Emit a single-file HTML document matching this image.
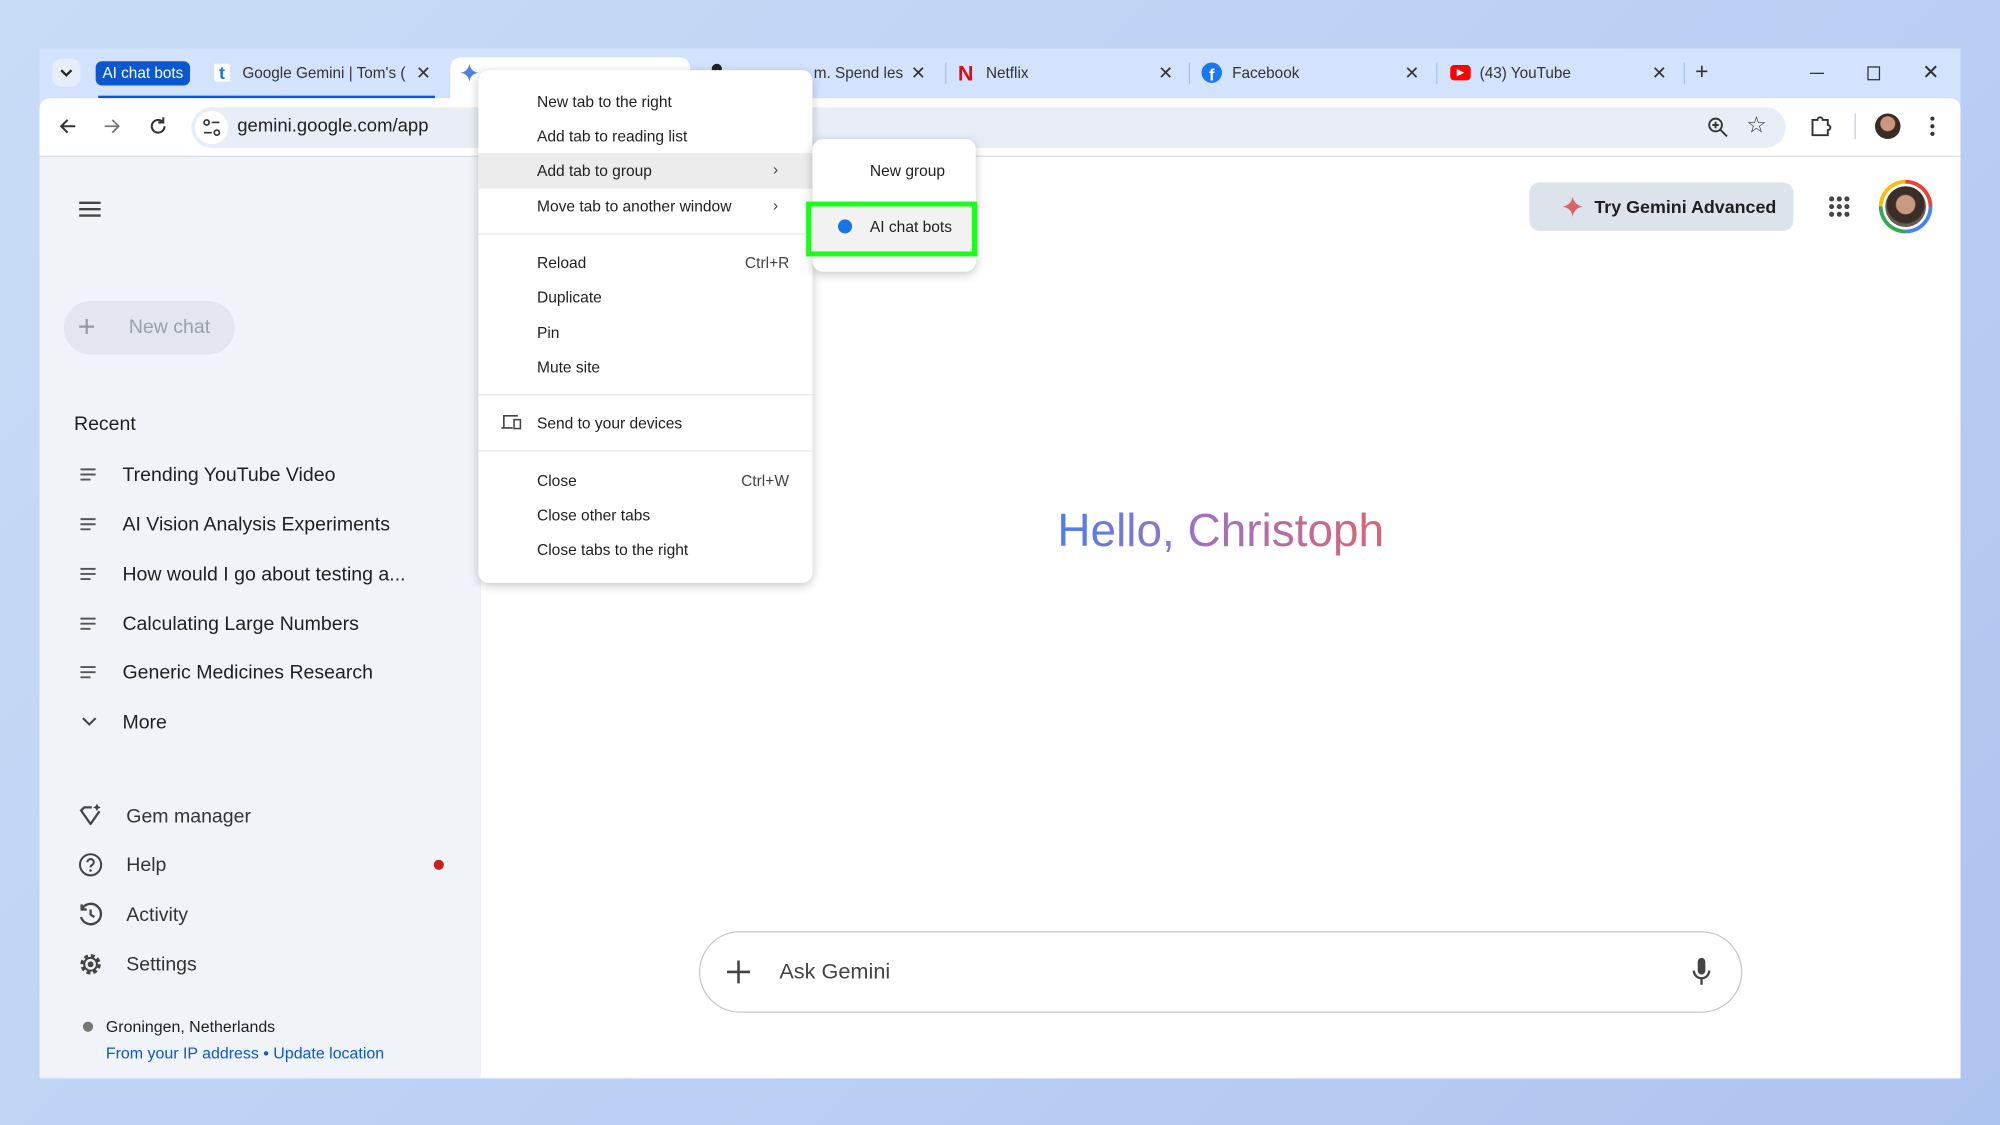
<!DOCTYPE html>
<html><head><meta charset="utf-8"><style>
html,body{margin:0;padding:0;width:2000px;height:1125px;overflow:hidden;}
body{background:linear-gradient(135deg,#c9dcf6 0%,#bcd2f4 50%,#aec4f0 100%);font-family:"Liberation Sans",sans-serif;}
#s{position:absolute;left:0;top:0;width:1568px;height:882px;transform:scale(1.27551);transform-origin:0 0;}
.a{position:absolute;}
.t{position:absolute;white-space:nowrap;}
.mi{position:absolute;left:421px;font-size:12.2px;color:#1f1f1f;white-space:nowrap;}
.side{position:absolute;font-size:15.3px;color:#1f1f1f;white-space:nowrap;}
.x{position:absolute;font-size:14px;color:#333;}
</style></head><body><div id="s">
<div class="a" style="left:31px;top:38px;width:1506px;height:808px;background:#d3e3fd;"></div>
<div class="a" style="left:41px;top:46px;width:22px;height:22px;border-radius:7px;background:#e6eefc;"></div>
<svg class="a" style="left:46px;top:51px" width="12" height="12"><path d="M2 4l4 4 4-4" stroke="#222" stroke-width="1.8" fill="none"/></svg>
<div class="a" style="left:75px;top:48px;width:74px;height:19px;border-radius:5px;background:#0b57d0;color:#fff;font-size:12px;line-height:19px;text-align:center;">AI chat bots</div>
<div class="a" style="left:77px;top:75px;width:264px;height:2px;background:#0b57d0;"></div>
<div class="a" style="left:168px;top:50px;width:12px;height:14px;background:#fff;color:#1a73e8;font-weight:bold;font-size:14px;line-height:14px;text-align:center;">t</div>
<div class="t" style="left:190px;top:50px;font-size:12px;color:#333;">Google Gemini | Tom's (</div>
<div class="x" style="left:326px;top:49px;">✕</div>
<div class="a" style="left:353px;top:45px;width:188px;height:35px;background:#fff;border-radius:8px 8px 0 0;"></div>
<svg class="a" style="left:361px;top:50px" width="14" height="14"><path d="M7 0C7.5 4 10 6.5 14 7C10 7.5 7.5 10 7 14C6.5 10 4 7.5 0 7C4 6.5 6.5 4 7 0Z" fill="#4c7fe8"/></svg>
<div class="a" style="left:558px;top:50px;width:8px;height:8px;border-radius:4px;background:#222;"></div>
<div class="t" style="left:638px;top:50px;font-size:12px;color:#333;">m. Spend les</div>
<div class="x" style="left:714px;top:49px;">✕</div>
<div class="a" style="left:741px;top:49px;width:1px;height:17px;background:#a8c0ec;"></div>
<div class="t" style="left:751px;top:48px;font-size:17px;font-weight:bold;color:#e50914;">N</div>
<div class="t" style="left:773px;top:50px;font-size:12px;color:#333;">Netflix</div>
<div class="x" style="left:908px;top:49px;">✕</div>
<div class="a" style="left:932px;top:49px;width:1px;height:17px;background:#a8c0ec;"></div>
<div class="a" style="left:942px;top:49px;width:16px;height:16px;border-radius:8px;background:#1877f2;color:#fff;font-weight:bold;font-size:13px;line-height:19px;text-align:center;">f</div>
<div class="t" style="left:966px;top:50px;font-size:12px;color:#333;">Facebook</div>
<div class="x" style="left:1101px;top:49px;">✕</div>
<div class="a" style="left:1126px;top:49px;width:1px;height:17px;background:#a8c0ec;"></div>
<div class="a" style="left:1137px;top:51px;width:16px;height:12px;border-radius:3px;background:#ff0000;"></div>
<svg class="a" style="left:1142px;top:54px" width="6" height="6"><path d="M0 0L6 3L0 6Z" fill="#fff"/></svg>
<div class="t" style="left:1160px;top:50px;font-size:12px;color:#333;">(43) YouTube</div>
<div class="x" style="left:1295px;top:49px;">✕</div>
<div class="a" style="left:1320px;top:49px;width:1px;height:17px;background:#a8c0ec;"></div>
<div class="t" style="left:1329px;top:46px;font-size:18px;color:#333;">+</div>
<div class="a" style="left:1419px;top:57px;width:11px;height:1px;background:#333;"></div>
<div class="a" style="left:1464px;top:52px;width:8px;height:9px;border:1.3px solid #333;"></div>
<div class="t" style="left:1507px;top:47px;font-size:16px;color:#333;">✕</div>
<div class="a" style="left:31px;top:77px;width:1506px;height:45px;background:#fff;border-radius:8px 8px 0 0;border-bottom:1px solid #dadce0;"></div>
<svg class="a" style="left:45px;top:91px" width="16" height="16"><path d="M14 8H3M8 3L3 8l5 5" stroke="#333" stroke-width="1.6" fill="none"/></svg>
<svg class="a" style="left:80px;top:91px" width="16" height="16"><path d="M2 8h11M8 3l5 5-5 5" stroke="#777" stroke-width="1.4" fill="none"/></svg>
<svg class="a" style="left:116px;top:91px" width="16" height="16"><path d="M13 8A5 5 0 1 1 11 4M12 1v4H8" stroke="#333" stroke-width="1.6" fill="none"/></svg>
<div class="a" style="left:150px;top:84px;width:1250px;height:32px;border-radius:16px;background:#e9eef6;"></div>
<div class="a" style="left:153px;top:87px;width:26px;height:26px;border-radius:13px;background:#fff;"></div>
<svg class="a" style="left:158px;top:92px" width="16" height="16"><circle cx="4" cy="4" r="2" stroke="#333" fill="none" stroke-width="1.3"/><path d="M8 4h6M2 12h6" stroke="#333" stroke-width="1.3"/><circle cx="12" cy="12" r="2" stroke="#333" fill="none" stroke-width="1.3"/></svg>
<div class="t" style="left:186px;top:91px;font-size:14.5px;color:#1f1f1f;">gemini.google.com/app</div>
<svg class="a" style="left:1338px;top:91px" width="17" height="17"><circle cx="7" cy="7" r="5" stroke="#333" stroke-width="1.5" fill="none"/><path d="M11 11l5 5M7 4.5v5M4.5 7h5" stroke="#333" stroke-width="1.5"/></svg>
<div class="t" style="left:1369px;top:88px;font-size:18px;color:#333;">☆</div>
<svg class="a" style="left:1419px;top:90px" width="17" height="18"><path d="M2 4h4a2 2 0 0 1 4 0h4v4a2 2 0 0 1 0 4v4H2z" stroke="#333" stroke-width="1.5" fill="none"/></svg>
<div class="a" style="left:1454px;top:89px;width:1px;height:20px;background:#c8d3e6;"></div>
<div class="a" style="left:1470px;top:89px;width:20px;height:20px;border-radius:10px;background:radial-gradient(circle at 50% 40%,#c9987e 0 35%,#3a2b25 40%);"></div>
<svg class="a" style="left:1511px;top:90px" width="8" height="18"><circle cx="4" cy="3" r="1.6" fill="#333"/><circle cx="4" cy="9" r="1.6" fill="#333"/><circle cx="4" cy="15" r="1.6" fill="#333"/></svg>
<div class="a" style="left:31px;top:123px;width:346px;height:722px;background:#f0f4f9;"></div>
<div class="a" style="left:377px;top:123px;width:1160px;height:722px;background:#fff;"></div>
<svg class="a" style="left:62px;top:157px" width="17" height="14"><path d="M0 2h17M0 7h17M0 12h17" stroke="#444" stroke-width="1.8"/></svg>
<div class="a" style="left:50px;top:236px;width:134px;height:42px;border-radius:21px;background:#e3e7ed;"></div>
<div class="t" style="left:61px;top:243px;font-size:24px;color:#999;font-weight:300;">+</div>
<div class="t" style="left:101px;top:248px;font-size:15.3px;color:#9aa0a6;">New chat</div>
<div class="t" style="left:58px;top:324px;font-size:15.3px;color:#1f1f1f;">Recent</div>
<svg width="0" height="0" style="position:absolute"><defs><symbol id="ln" viewBox="0 0 12 10"><path d="M0 1h12M0 5h12M0 9h8" stroke="#555" stroke-width="1.5"/></symbol></defs></svg>
<svg class="a" style="left:63px;top:367px" width="12" height="10"><use href="#ln"/></svg>
<div class="side" style="left:96px;top:364px;">Trending YouTube Video</div>
<svg class="a" style="left:63px;top:406px" width="12" height="10"><use href="#ln"/></svg>
<div class="side" style="left:96px;top:403px;">AI Vision Analysis Experiments</div>
<svg class="a" style="left:63px;top:445px" width="12" height="10"><use href="#ln"/></svg>
<div class="side" style="left:96px;top:442px;">How would I go about testing a...</div>
<svg class="a" style="left:63px;top:484px" width="12" height="10"><use href="#ln"/></svg>
<div class="side" style="left:96px;top:481px;">Calculating Large Numbers</div>
<svg class="a" style="left:63px;top:522px" width="12" height="10"><use href="#ln"/></svg>
<div class="side" style="left:96px;top:519px;">Generic Medicines Research</div>
<svg class="a" style="left:64px;top:562px" width="12" height="8"><path d="M1 1l5 5 5-5" stroke="#444" stroke-width="1.6" fill="none"/></svg>
<div class="side" style="left:96px;top:558px;">More</div>
<svg class="a" style="left:61px;top:630px" width="20" height="20"><path d="M2 6l3-3h6M3 6l7 10 7-10" stroke="#444" stroke-width="1.8" fill="none" stroke-linejoin="round"/><path d="M15 0l1 2 2 1-2 1-1 2-1-2-2-1 2-1z" fill="#444"/></svg>
<div class="side" style="left:99px;top:632px;color:#333;">Gem manager</div>
<svg class="a" style="left:61px;top:668px" width="20" height="20"><circle cx="10" cy="10" r="8.3" stroke="#444" stroke-width="1.6" fill="none"/><path d="M7.5 8a2.5 2.5 0 1 1 3.5 2.3c-.8.4-1 .9-1 1.7" stroke="#444" stroke-width="1.6" fill="none"/><circle cx="10" cy="14.5" r="1" fill="#444"/></svg>
<div class="side" style="left:99px;top:670px;color:#333;">Help</div>
<div class="a" style="left:340px;top:674px;width:8px;height:8px;border-radius:4px;background:#c5221f;"></div>
<svg class="a" style="left:61px;top:707px" width="20" height="20"><path d="M3 6A8 8 0 1 1 2.5 12M3 2v4h4M10 6v4l3 2" stroke="#444" stroke-width="1.8" fill="none"/></svg>
<div class="side" style="left:99px;top:709px;color:#333;">Activity</div>
<svg class="a" style="left:61px;top:746px" width="20" height="20"><circle cx="10" cy="10" r="6.5" stroke="#444" stroke-width="3" fill="none" stroke-dasharray="3 2.1"/><circle cx="10" cy="10" r="5" stroke="#444" stroke-width="1.6" fill="none"/><circle cx="10" cy="10" r="2.3" fill="#444"/></svg>
<div class="side" style="left:99px;top:748px;color:#333;">Settings</div>
<div class="a" style="left:65px;top:801px;width:8px;height:8px;border-radius:4px;background:#777;"></div>
<div class="t" style="left:83px;top:798px;font-size:12.5px;color:#1f1f1f;">Groningen, Netherlands</div>
<div class="t" style="left:83px;top:819px;font-size:12.5px;color:#0b57d0;">From your IP address • Update location</div>
<div class="a" style="left:1199px;top:143px;width:207px;height:38px;border-radius:8px;background:#dde3ea;"></div>
<svg class="a" style="left:1225px;top:154px" width="16" height="16"><path d="M8 0C8.6 4.5 11.5 7.4 16 8C11.5 8.6 8.6 11.5 8 16C7.4 11.5 4.5 8.6 0 8C4.5 7.4 7.4 4.5 8 0Z" fill="#d9636b"/></svg>
<div class="t" style="left:1250px;top:154px;font-size:14px;color:#1f1f1f;font-weight:bold;">Try Gemini Advanced</div>
<svg class="a" style="left:1433px;top:153px" width="18" height="18"><g fill="#444"><circle cx="3" cy="3" r="2"/><circle cx="9" cy="3" r="2"/><circle cx="15" cy="3" r="2"/><circle cx="3" cy="9" r="2"/><circle cx="9" cy="9" r="2"/><circle cx="15" cy="9" r="2"/><circle cx="3" cy="15" r="2"/><circle cx="9" cy="15" r="2"/><circle cx="15" cy="15" r="2"/></g></svg>
<div class="a" style="left:1473px;top:141px;width:42px;height:42px;border-radius:21px;background:conic-gradient(#ea4335 0 25%,#4285f4 25% 50%,#34a853 50% 75%,#fbbc05 75% 100%);"></div>
<div class="a" style="left:1476px;top:144px;width:36px;height:36px;border-radius:18px;background:#fff;"></div>
<div class="a" style="left:1478px;top:146px;width:32px;height:32px;border-radius:16px;background:radial-gradient(circle at 50% 45%,#c99a82 0 30%,#3b2e28 34% 60%,#6b5a50 64%);"></div>
<div class="t" style="left:829px;top:395px;font-size:36px;background:linear-gradient(90deg,#4a80ea 0%,#9b72cb 40%,#d96570 100%);-webkit-background-clip:text;background-clip:text;color:transparent;">Hello, Christoph</div>
<div class="a" style="left:548px;top:730px;width:816px;height:62px;border:1px solid #c8c8c8;border-radius:32px;background:#fff;"></div>
<svg class="a" style="left:569px;top:752px" width="20" height="20"><path d="M10 1v18M1 10h18" stroke="#444" stroke-width="2"/></svg>
<div class="t" style="left:611px;top:752px;font-size:17px;color:#444;">Ask Gemini</div>
<svg class="a" style="left:1326px;top:751px" width="16" height="22"><rect x="5" y="0" width="6" height="13" rx="3" fill="#444"/><path d="M2 10a6 6 0 0 0 12 0M8 16v5" stroke="#444" stroke-width="1.8" fill="none"/></svg>
<div class="a" style="left:375px;top:55px;width:262px;height:402px;background:#fff;border-radius:8px;box-shadow:0 2px 8px rgba(0,0,0,.22);"></div>
<div class="a" style="left:375px;top:120px;width:262px;height:28px;background:#ececec;"></div>
<div class="mi" style="top:73px;">New tab to the right</div>
<div class="mi" style="top:100px;">Add tab to reading list</div>
<div class="mi" style="top:127px;">Add tab to group</div>
<div class="t" style="left:606px;top:126px;font-size:12px;color:#444;">›</div>
<div class="mi" style="top:155px;">Move tab to another window</div>
<div class="t" style="left:606px;top:154px;font-size:12px;color:#444;">›</div>
<div class="a" style="left:375px;top:183px;width:262px;height:1px;background:#e6e9f0;"></div>
<div class="mi" style="top:199px;">Reload</div><div class="t" style="left:584px;top:199px;font-size:12.2px;color:#444;">Ctrl+R</div>
<div class="mi" style="top:226px;">Duplicate</div>
<div class="mi" style="top:254px;">Pin</div>
<div class="mi" style="top:281px;">Mute site</div>
<div class="a" style="left:375px;top:309px;width:262px;height:1px;background:#e6e9f0;"></div>
<svg class="a" style="left:393px;top:325px" width="16" height="12"><path d="M2 10V1h11M0 10.5h9" stroke="#444" stroke-width="1.3" fill="none"/><rect x="10" y="4" width="5" height="7" stroke="#444" stroke-width="1.2" fill="none"/></svg>
<div class="mi" style="top:325px;">Send to your devices</div>
<div class="a" style="left:375px;top:353px;width:262px;height:1px;background:#e6e9f0;"></div>
<div class="mi" style="top:370px;">Close</div><div class="t" style="left:581px;top:370px;font-size:12.2px;color:#444;">Ctrl+W</div>
<div class="mi" style="top:397px;">Close other tabs</div>
<div class="mi" style="top:424px;">Close tabs to the right</div>
<div class="a" style="left:637px;top:109px;width:128px;height:104px;background:#fff;border-radius:8px;box-shadow:0 2px 8px rgba(0,0,0,.22);"></div>
<div class="t" style="left:682px;top:127px;font-size:12.2px;color:#1f1f1f;">New group</div>
<div class="a" style="left:632px;top:158px;width:134px;height:43px;border:4px solid #1aff1a;box-sizing:border-box;"></div>
<div class="a" style="left:636px;top:162px;width:126px;height:35px;background:#f2f2f2;"></div>
<div class="a" style="left:657px;top:172px;width:11px;height:11px;border-radius:6px;background:#1a73e8;"></div>
<div class="t" style="left:682px;top:171px;font-size:12.2px;color:#1f1f1f;">AI chat bots</div>
</div></body></html>
